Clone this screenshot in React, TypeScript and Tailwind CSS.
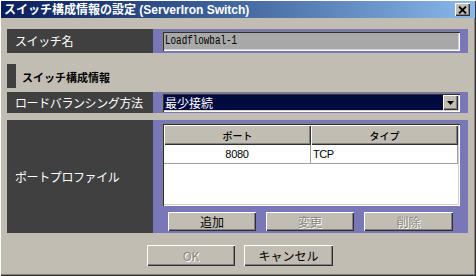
import React from "react";

const raised =
  "shadow-[inset_1px_1px_0_#ffffff,inset_-1px_-1px_0_#303030,inset_-2px_-2px_0_#808080]";
const sunken =
  "shadow-[inset_1px_1px_0_#808080,inset_2px_2px_0_#303030,inset_-1px_-1px_0_#ffffff,inset_-2px_-2px_0_#d4d0c8]";
const jp = "[font-family:'Noto_Sans_CJK_JP','Noto_Sans',sans-serif]";

function Btn({ label, disabled }: { label: string; disabled?: boolean }) {
  return (
    <div
      className={`h-full flex items-center justify-center bg-[#c1bdb3] text-[12px] ${jp} ${raised} ${
        disabled ? "text-[#8a877f] [text-shadow:1px_1px_0_#ffffff]" : "text-black"
      }`}
    >
      {label}
    </div>
  );
}

export default function App() {
  return (
    <div
      className={`w-[476px] h-[276px] bg-[#c1bdb3] flex flex-col ${jp} shadow-[inset_1px_1px_0_#ffffff,inset_-1px_-1px_0_#303030,inset_-2px_-2px_0_#808080] overflow-hidden`}
    >
      {/* title bar */}
      <div className="mx-[1px] mt-[1px] h-[17px] bg-gradient-to-r from-[#0a1d5a] to-[#8ab8ea] flex items-center pl-[3px] pr-[5px]">
        <span className="text-white text-[12px] font-bold leading-none whitespace-nowrap [font-family:'Liberation_Sans','Noto_Sans_CJK_JP',sans-serif]">
          スイッチ構成情報の設定 (ServerIron Switch)
        </span>
        <div className="flex-1" />
        <div className={`w-[15px] h-[13px] bg-[#c1bdb3] flex items-center justify-center ${raised}`}>
          <svg width="9" height="8" viewBox="0 0 9 8">
            <path d="M1 0.5 L8 7.5 M8 0.5 L1 7.5" stroke="#000" strokeWidth="1.8" />
          </svg>
        </div>
      </div>

      <div className="flex flex-col pl-[7px] pr-[8px]">
        {/* switch name row */}
        <div className="mt-[11px] h-[24px] flex">
          <div className="w-[146px] bg-[#404040] text-white text-[12px] flex items-center pl-[8px] tracking-[-0.4px]">
            スイッチ名
          </div>
          <div className="flex-1 bg-[#7878b8] pl-[9px] pr-[8px] py-[2px] flex">
            <div className={`flex-1 bg-[#a8a8a8] flex items-center pl-[3px] overflow-hidden ${sunken}`}>
              <span className="inline-block origin-left scale-x-[0.77] text-[12px] text-black whitespace-nowrap [font-family:'Liberation_Mono',monospace]">
                Loadflowbal-1
              </span>
            </div>
          </div>
        </div>

        {/* section header */}
        <div className="mt-[11px] h-[24px] flex items-center">
          <div className="w-[9px] h-full bg-[#404040]" />
          <span className="ml-[6px] mt-[2px] text-[11px] font-bold text-black">スイッチ構成情報</span>
        </div>

        {/* load balancing row */}
        <div className="mt-[4px] h-[21px] flex">
          <div className="w-[146px] bg-[#404040] text-white text-[12px] flex items-center pl-[8px] tracking-[-0.4px] whitespace-nowrap">
            ロードバランシング方法
          </div>
          <div className="flex-1 bg-[#7878b8] pl-[9px] pr-[8px] py-[1px] flex">
            <div className={`flex-1 bg-[#000a3f] flex items-center p-[2px] ${sunken}`}>
              <span className="flex-1 text-white text-[12px] pl-[1px]">最少接続</span>
              <div className={`w-[15px] h-full bg-[#c1bdb3] flex items-center justify-center ${raised}`}>
                <svg width="7" height="4" viewBox="0 0 7 4">
                  <path d="M0 0 H7 L3.5 4 Z" fill="#000" />
                </svg>
              </div>
            </div>
          </div>
        </div>

        {/* port profile row */}
        <div className="mt-[7px] h-[113px] flex">
          <div className="w-[146px] bg-[#404040] text-white text-[12px] flex items-center pl-[8px] tracking-[-0.4px]">
            ポートプロファイル
          </div>
          <div className="flex-1 bg-[#7878b8] pl-[9px] pr-[8px] pt-[3px] pb-[2px] flex flex-col">
            <div className={`h-[83px] bg-white p-[2px] flex flex-col ${sunken}`}>
              <div className="h-[20px] flex text-[10px] font-medium text-black">
                <div className={`w-[147px] bg-[#c1bdb3] flex items-center justify-center ${raised}`}>ポート</div>
                <div className={`flex-1 bg-[#c1bdb3] flex items-center justify-center ${raised}`}>タイプ</div>
              </div>
              <div className="h-[19px] flex text-[11px] text-black border-b border-[#a0a0a0] [font-family:'Liberation_Sans',sans-serif]">
                <div className="w-[147px] flex items-center justify-center border-r border-[#a0a0a0] tracking-[-0.3px]">
                  8080
                </div>
                <div className="flex-1 flex items-center pl-[2px] border-r border-[#a0a0a0] tracking-[-0.5px]">TCP</div>
              </div>
            </div>
            <div className="mt-[6px] h-[19px] flex pl-[6px] gap-[10px]">
              <div className="w-[88px] h-full">
                <Btn label="追加" />
              </div>
              <div className="w-[88px] h-full">
                <Btn label="変更" disabled />
              </div>
              <div className="w-[89px] h-full">
                <Btn label="削除" disabled />
              </div>
            </div>
          </div>
        </div>

        {/* OK / Cancel */}
        <div className="mt-[12px] h-[21px] flex pl-[140px] gap-[9px]">
          <div className="w-[88px] h-full">
            <Btn label="OK" disabled />
          </div>
          <div className="w-[89px] h-full">
            <Btn label="キャンセル" />
          </div>
        </div>
      </div>
    </div>
  );
}
